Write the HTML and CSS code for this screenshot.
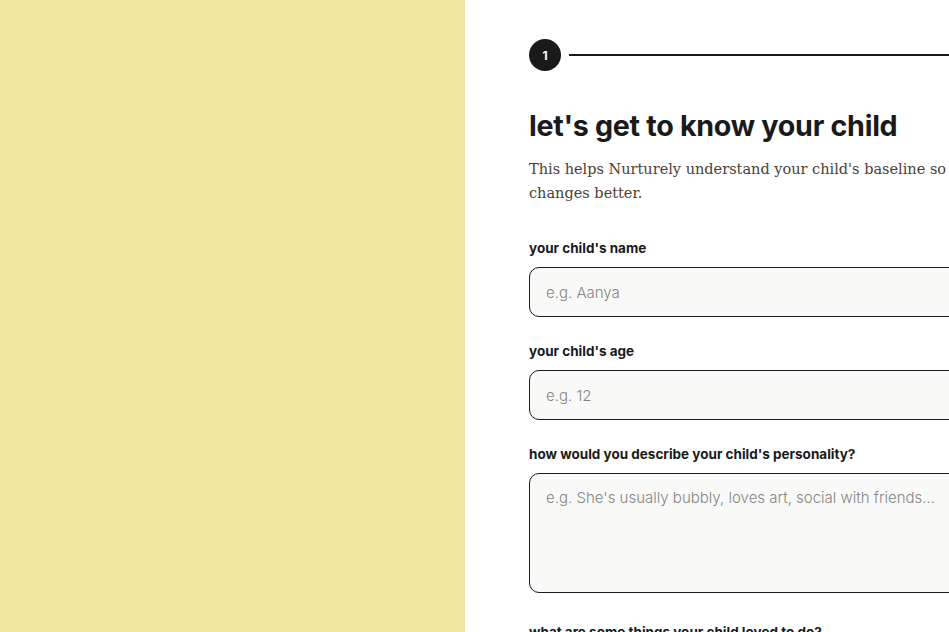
FILE: index.html
```html
<!DOCTYPE html>
<html>
	<head>
		<title>Nurturely</title>
		<meta name="viewport" content="width=device-width, initial-scale=1">
		<link rel="stylesheet" href="styles.css">
	</head>
	<body>
		<aside class="side"></aside>
		<main class="main">
			<div class="steps">
				<span class="step">1</span>
				<span class="track"></span>
			</div>
			<h1>let's get to know your child</h1>
			<p class="lead">This helps Nurturely understand your child's baseline so we can notice changes better.</p>
			<form class="form">
				<label class="field">
					<span class="label">your child's name</span>
					<input type="text" placeholder="e.g. Aanya">
				</label>
				<label class="field">
					<span class="label">your child's age</span>
					<input type="text" placeholder="e.g. 12">
				</label>
				<label class="field long">
					<span class="label">how would you describe your child's personality?</span>
					<textarea placeholder="e.g. She's usually bubbly, loves art, social with friends..."></textarea>
				</label>
				<label class="field long">
					<span class="label">what are some things your child loved to do?</span>
					<textarea placeholder="e.g. drawing, dancing, football..."></textarea>
				</label>
			</form>
		</main>
	</body>
</html>
```

FILE: styles.css
```css
html, body {
	margin: 0;
	padding: 0;
	height: 100%;
	overflow: hidden;
	background: #fff;
	font-family: Inter, sans-serif;
	color: #1a1a1a;
}
body {
	display: flex;
}
.side {
	flex: 0 0 465px;
	background: #efe79f;
}
.main {
	flex: 0 0 620px;
	padding: 39px 0 0 64px;
}
.steps {
	display: flex;
	align-items: center;
	gap: 8px;
}
.step {
	width: 32px;
	height: 32px;
	border-radius: 50%;
	background: #1a1a1a;
	color: #fff;
	font-size: 12px;
	font-weight: 700;
	display: flex;
	align-items: center;
	justify-content: center;
}
.track {
	flex: 1;
	height: 2px;
	background: #1a1a1a;
}
h1 {
	margin: 37px 0 0;
	font-size: 28.7px;
	line-height: 36px;
	font-weight: 700;
	letter-spacing: -0.3px;
}
.lead {
	margin: 13px 0 0;
	font-family: "DejaVu Serif", serif;
	font-size: 14.5px;
	line-height: 24px;
	color: #4b4038;
	width: 540px;
}
.form {
	margin-top: 33px;
}
.field {
	display: block;
	margin-bottom: 24px;
}
.field.long {
	margin-bottom: 29px;
}
.label {
	display: block;
	font-size: 13.5px;
	line-height: 20px;
	font-weight: 700;
	margin-bottom: 9px;
}
input, textarea {
	display: block;
	box-sizing: border-box;
	width: 100%;
	border: 1px solid #1a1a1a;
	border-radius: 10px;
	background: #f9f9f7;
	font-family: Inter, sans-serif;
	font-size: 15px;
	padding: 0 16px;
	color: #1a1a1a;
}
input {
	height: 50px;
}
textarea {
	height: 120px;
	padding-top: 14px;
	resize: none;
}
::placeholder {
	color: #858585;
	font-weight: 300;
}
```
